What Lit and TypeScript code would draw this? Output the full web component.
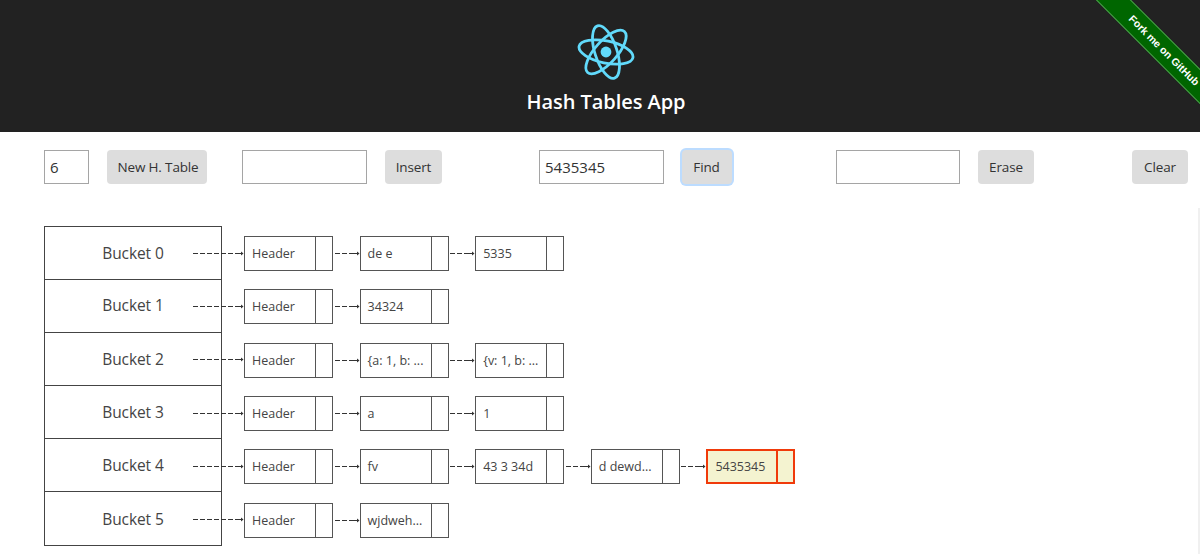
import { LitElement, html, css, svg } from "lit";
import { customElement } from "lit/decorators.js";

const DATA: { items: string[]; found?: number }[] = [
  { items: ["de e", "5335"] },
  { items: ["34324"] },
  { items: ["{a: 1, b: ...", "{v: 1, b: ..."] },
  { items: ["a", "1"] },
  { items: ["fv", "43 3 34d", "d dewd...", "5435345"], found: 3 },
  { items: ["wjdweh..."] },
];

const arrow = (w: number) => svg`<svg class="arrow" width=${w} height="9" viewBox="0 0 ${w} 9" aria-hidden="true">
  <line x1="0" y1="4.5" x2=${w - 1} y2="4.5" stroke="#333" stroke-width="1" stroke-dasharray="5 2"></line>
  <line x1=${w - 9} y1="4.5" x2=${w - 1} y2="4.5" stroke="#333" stroke-width="1"></line>
  <path d="M${w - 3} 2.5 L${w - 0.5} 4.5 L${w - 3} 6.5 Z" fill="#333"></path>
</svg>`;

@customElement("app-root")
export class AppRoot extends LitElement {
  static styles = css`
    :host { display: block; position: relative; width: 1200px; height: 558px; overflow: hidden; background: #fff; font-family: "Open Sans", "Noto Sans", sans-serif; color: #333; }
    header { position: relative; height: 132px; padding-left: 12px; background: #222; display: flex; flex-direction: column; align-items: center; overflow: hidden; box-sizing: border-box; }
    .logo { margin-top: 23px; display: block; }
    h1 { margin: 7px 0 0 0; font-size: 20px; line-height: 28px; font-weight: 600; color: #fff; letter-spacing: -0.05px; }
    .ribbon { position: absolute; top: 38px; right: -68.5px; width: 210px; height: 25px; line-height: 25px; transform: rotate(45deg); background: #060; color: #fff; text-align: center; font-family: "Liberation Sans", Arial, sans-serif; font-size: 10.5px; font-weight: 700; text-decoration: none; box-shadow: inset 0 1px 0 #4c9a4c, inset 0 -1px 0 #4c9a4c; }
    .controls { display: flex; align-items: center; height: 34px; margin-top: 18px; padding-left: 44px; }
    .group { display: flex; align-items: center; }
    .g2 { margin-left: 35px; } .g3 { margin-left: 97px; } .g4 { margin-left: 104.5px; } .g5 { margin-left: 98px; }
    input { box-sizing: border-box; height: 34px; width: 125px; padding: 0 5px; border: 1px solid #a5a5a5; font: inherit; font-size: 15px; color: #333; outline: none; background: #fff; }
    input.small { width: 45px; }
    input.narrow { width: 124px; }
    button { box-sizing: border-box; height: 34px; border: none; border-radius: 4px; background: #ddd; color: #333; font: inherit; font-size: 13.5px; letter-spacing: -0.15px; padding: 0; margin-left: 18px; }
    .g5 button { margin-left: 0; }
    button.focus { box-shadow: 0 0 0 2px #bcdcff; }
    .w100 { width: 100px; padding-left: 2px; } .w57 { width: 57px; } .w50 { width: 50px; margin-left: 17.5px; } .w56 { width: 56px; }
    .table { margin: 42px 0 0 44px; }
    .row { display: flex; align-items: center; height: 53.3px; }
    .bucket { position: relative; box-sizing: border-box; width: 178px; height: 100%; flex: none; display: flex; align-items: center; justify-content: center; border: 1px solid #444; border-top: none; font-size: 15.5px; letter-spacing: -0.1px; color: #444; }
    .row:first-child .bucket { border-top: 1px solid #444; height: 54px; }
    .lead { position: absolute; left: 148px; top: 50%; margin-top: -3.5px; }
    .arrow { display: block; flex: none; }
    .list { display: flex; align-items: center; margin: 2px 0 0 22px; }
    .link { margin: 0 0 0 1.6px; }
    .node { box-sizing: border-box; display: flex; width: 89px; height: 35px; border: 1px solid #555; flex: none; font-size: 12.5px; color: #444; }
    .val { box-sizing: border-box; flex: 1; min-width: 0; padding-left: 7px; line-height: 33px; white-space: nowrap; overflow: hidden; }
    .ptr { box-sizing: border-box; width: 17px; flex: none; border-left: 1px solid #555; }
    .node.found { border: 2px solid #f03a0a; background: #f4f3d0; }
    .node.found .val { line-height: 31px; padding-left: 7px; color: #444; }
    .node.found .ptr { border-left: 2px solid #f03a0a; width: 17px; }
    .edge { position: absolute; right: 0; top: 208px; bottom: 4px; width: 2px; background: #f0f0f0; }
  `;

  render() {
    return html`
      <header>
        <svg class="logo" width="58" height="58" viewBox="-29 -29 58 58" aria-hidden="true">
          <g fill="none" stroke="#61dafb" stroke-width="2.8">
            <ellipse rx="27.5" ry="11" transform="rotate(12)"></ellipse>
            <ellipse rx="27.5" ry="11" transform="rotate(72)"></ellipse>
            <ellipse rx="27.5" ry="11" transform="rotate(132)"></ellipse>
          </g>
          <circle r="5.4" fill="#61dafb"></circle>
        </svg>
        <h1>Hash Tables App</h1>
        <a class="ribbon" href="#">Fork me on GitHub</a>
      </header>
      <div class="controls">
        <div class="group"><input class="small" value="6" /><button class="w100">New H. Table</button></div>
        <div class="group g2"><input /><button class="w57">Insert</button></div>
        <div class="group g3"><input value="5435345" /><button class="focus w50">Find</button></div>
        <div class="group g4"><input class="narrow" /><button class="w56">Erase</button></div>
        <div class="group g5"><button class="w56">Clear</button></div>
      </div>
      <div class="table">
        ${DATA.map((b, i) => html`
          <div class="row">
            <div class="bucket">Bucket ${i}<span class="lead">${arrow(51)}</span></div>
            <div class="list">
              <div class="node"><div class="val">Header</div><div class="ptr"></div></div>
              ${b.items.map((it, j) => html`
                <span class="link">${arrow(25)}</span>
                <div class="node ${b.found === j ? "found" : ""}"><div class="val">${it}</div><div class="ptr"></div></div>
              `)}
            </div>
          </div>`)}
      </div>
      <div class="edge"></div>
    `;
  }
}
